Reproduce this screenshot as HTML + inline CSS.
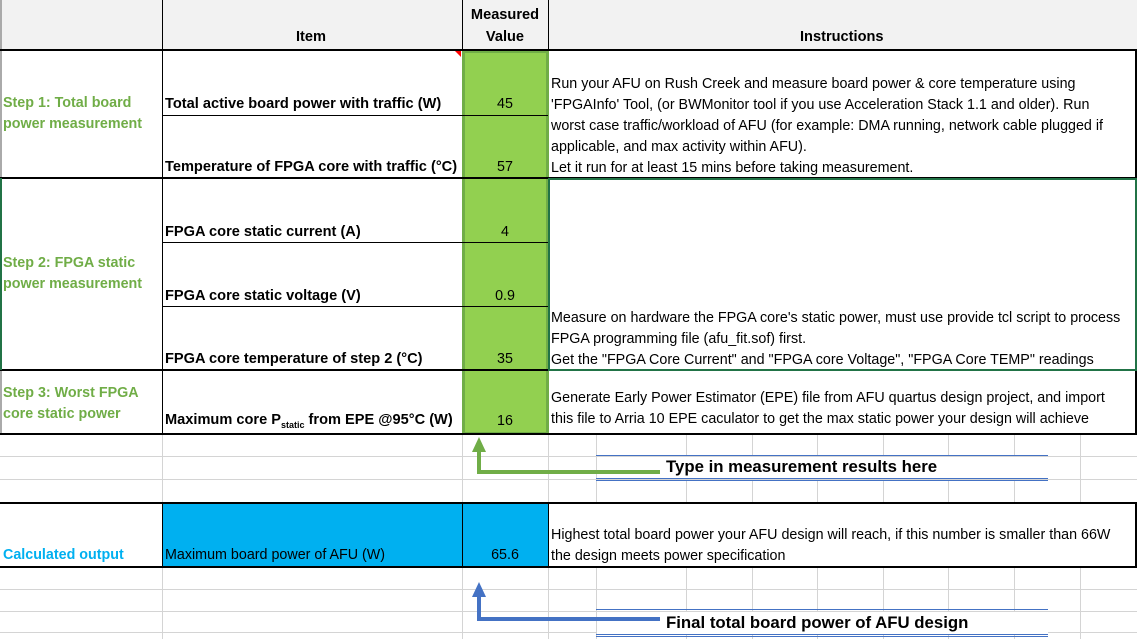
<!DOCTYPE html><html><head><style>
body{margin:0;width:1137px;height:639px;background:#fff;position:relative;overflow:hidden;font-family:"Liberation Sans",sans-serif;font-size:14.3px;color:#000}
div{position:absolute;box-sizing:border-box}
.t{white-space:nowrap;line-height:21px}
.b{font-weight:bold;font-size:14.6px}
.g{color:#70ad47;font-weight:bold}
.h{background:#d4d4d4}
.k{background:#000}
</style></head><body>
<div style="left:0;top:0;width:1137px;height:50px;background:#f2f2f2"></div>
<div class="h" style="left:0;top:456px;width:1137px;height:1px"></div>
<div class="h" style="left:0;top:479px;width:1137px;height:1px"></div>
<div class="h" style="left:0;top:589px;width:1137px;height:1px"></div>
<div class="h" style="left:0;top:611px;width:1137px;height:1px"></div>
<div class="h" style="left:0;top:632px;width:1137px;height:1px"></div>
<div class="h" style="left:162px;top:434px;width:1px;height:205px"></div>
<div class="h" style="left:462px;top:434px;width:1px;height:205px"></div>
<div class="h" style="left:548px;top:434px;width:1px;height:205px"></div>
<div class="h" style="left:596px;top:434px;width:1px;height:70px"></div>
<div class="h" style="left:686px;top:434px;width:1px;height:70px"></div>
<div class="h" style="left:752px;top:434px;width:1px;height:70px"></div>
<div class="h" style="left:817px;top:434px;width:1px;height:70px"></div>
<div class="h" style="left:883px;top:434px;width:1px;height:70px"></div>
<div class="h" style="left:948px;top:434px;width:1px;height:70px"></div>
<div class="h" style="left:1014px;top:434px;width:1px;height:70px"></div>
<div class="h" style="left:1080px;top:434px;width:1px;height:70px"></div>
<div class="h" style="left:596px;top:567px;width:1px;height:72px"></div>
<div class="h" style="left:686px;top:567px;width:1px;height:72px"></div>
<div class="h" style="left:752px;top:567px;width:1px;height:72px"></div>
<div class="h" style="left:817px;top:567px;width:1px;height:72px"></div>
<div class="h" style="left:883px;top:567px;width:1px;height:72px"></div>
<div class="h" style="left:948px;top:567px;width:1px;height:72px"></div>
<div class="h" style="left:1014px;top:567px;width:1px;height:72px"></div>
<div class="h" style="left:1080px;top:567px;width:1px;height:72px"></div>
<div style="left:597px;top:457px;width:451px;height:22px;background:#fff"></div>
<div style="left:597px;top:612px;width:451px;height:22px;background:#fff"></div>
<div style="left:0;top:0;width:2px;height:434px;background:#aaa"></div>
<div style="left:462px;top:50px;width:87px;height:385px;background:#92d050;border:3px solid #70ad47"></div>
<div style="left:162px;top:503px;width:387px;height:64px;background:#00b0f0"></div>
<div class="k" style="left:162px;top:0;width:1px;height:434px"></div>
<div class="k" style="left:462px;top:0;width:1px;height:50px"></div>
<div class="k" style="left:548px;top:0;width:1px;height:50px"></div>
<div class="k" style="left:0;top:49px;width:1137px;height:2px"></div>
<div class="k" style="left:162px;top:115px;width:386px;height:1px"></div>
<div class="k" style="left:0;top:177px;width:1137px;height:2px"></div>
<div class="k" style="left:162px;top:242px;width:386px;height:1px"></div>
<div class="k" style="left:162px;top:306px;width:386px;height:1px"></div>
<div class="k" style="left:0;top:369px;width:1137px;height:2px"></div>
<div class="k" style="left:0;top:433px;width:1137px;height:2px"></div>
<div class="k" style="left:1135px;top:50px;width:2px;height:384px"></div>
<div style="left:548px;top:178px;width:589px;height:193px;border:2px solid #217346"></div>
<div style="left:0;top:178px;width:2px;height:192px;background:#217346"></div>
<div class="k" style="left:0;top:502px;width:1137px;height:2px"></div>
<div class="k" style="left:0;top:566px;width:1137px;height:2px"></div>
<div class="k" style="left:162px;top:503px;width:1px;height:64px"></div>
<div class="k" style="left:462px;top:503px;width:1px;height:64px"></div>
<div class="k" style="left:548px;top:503px;width:1px;height:64px"></div>
<div class="k" style="left:1135px;top:503px;width:2px;height:64px"></div>
<div style="left:455px;top:51px;width:0;height:0;border-left:6px solid transparent;border-top:6px solid red"></div>
<div class="t b" style="left:296px;top:27px">Item</div>
<div class="t b" style="left:462px;top:5px;width:86px;text-align:center">Measured</div>
<div class="t b" style="left:462px;top:27px;width:86px;text-align:center">Value</div>
<div class="t b" style="left:800px;top:27px">Instructions</div>
<div class="t g" style="left:3px;top:93px">Step 1: Total board</div>
<div class="t g" style="left:3px;top:114px">power measurement</div>
<div class="t g" style="left:3px;top:253px">Step 2: FPGA static</div>
<div class="t g" style="left:3px;top:274px">power measurement</div>
<div class="t g" style="left:3px;top:383px">Step 3: Worst FPGA</div>
<div class="t g" style="left:3px;top:404px">core static power</div>
<div class="t" style="left:3px;top:545px;color:#00b0f0;font-weight:bold">Calculated output</div>
<div class="t b" style="left:165px;top:94px">Total active board power with traffic (W)</div>
<div class="t b" style="left:165px;top:157px">Temperature of FPGA core with traffic (°C)</div>
<div class="t b" style="left:165px;top:222px">FPGA core static current (A)</div>
<div class="t b" style="left:165px;top:286px">FPGA core static voltage (V)</div>
<div class="t b" style="left:165px;top:349px">FPGA core temperature of step 2 (°C)</div>
<div class="t b" style="left:165px;top:410px">Maximum core P<sub style="font-size:9px">static</sub> from EPE @95°C (W)</div>
<div class="t" style="left:165px;top:545px">Maximum board power of AFU (W)</div>
<div class="t" style="left:462px;top:94px;width:86px;text-align:center">45</div>
<div class="t" style="left:462px;top:157px;width:86px;text-align:center">57</div>
<div class="t" style="left:462px;top:222px;width:86px;text-align:center">4</div>
<div class="t" style="left:462px;top:286px;width:86px;text-align:center">0.9</div>
<div class="t" style="left:462px;top:349px;width:86px;text-align:center">35</div>
<div class="t" style="left:462px;top:411px;width:86px;text-align:center">16</div>
<div class="t" style="left:462px;top:545px;width:86px;text-align:center">65.6</div>
<div class="t" style="left:551px;top:74px">Run your AFU on Rush Creek and measure board power &amp; core temperature using</div>
<div class="t" style="left:551px;top:95px">'FPGAInfo' Tool, (or BWMonitor tool if you use Acceleration Stack 1.1 and older). Run</div>
<div class="t" style="left:551px;top:116px">worst case traffic/workload of AFU (for example: DMA running, network cable plugged if</div>
<div class="t" style="left:551px;top:137px">applicable, and max activity within AFU).</div>
<div class="t" style="left:551px;top:158px">Let it run for at least 15 mins before taking measurement.</div>
<div class="t" style="left:551px;top:308px">Measure on hardware the FPGA core's static power, must use provide tcl script to process</div>
<div class="t" style="left:551px;top:329px">FPGA programming file (afu_fit.sof) first.</div>
<div class="t" style="left:551px;top:350px">Get the "FPGA Core Current" and "FPGA core Voltage", "FPGA Core TEMP" readings</div>
<div class="t" style="left:551px;top:388px">Generate Early Power Estimator (EPE) file from AFU quartus design project, and import</div>
<div class="t" style="left:551px;top:409px">this file to Arria 10 EPE caculator to get the max static power your design will achieve</div>
<div class="t" style="left:551px;top:525px">Highest total board power your AFU design will reach, if this number is smaller than 66W</div>
<div class="t" style="left:551px;top:546px">the design meets power specification</div>
<div style="left:596px;top:455px;width:452px;height:1px;background:#4472c4"></div>
<div style="left:596px;top:478px;width:452px;height:3px;border-top:1px solid #4472c4;border-bottom:1px solid #4472c4"></div>
<div class="t" style="left:666px;top:456px;font-size:16.8px;font-weight:bold">Type in measurement results here</div>
<div style="left:596px;top:609px;width:452px;height:1px;background:#4472c4"></div>
<div style="left:596px;top:634px;width:452px;height:3px;border-top:1px solid #4472c4;border-bottom:1px solid #4472c4"></div>
<div class="t" style="left:666px;top:612px;font-size:16.8px;font-weight:bold">Final total board power of AFU design</div>
<svg style="position:absolute;left:0;top:0" width="1137" height="639">
<polyline points="660,472 479,472 479,451" fill="none" stroke="#70ad47" stroke-width="4"/>
<polygon points="472,452 486,452 479,437" fill="#70ad47"/>
<polyline points="660,619 479,619 479,596" fill="none" stroke="#4472c4" stroke-width="4"/>
<polygon points="472,597 486,597 479,582" fill="#4472c4"/>
</svg>
</body></html>
